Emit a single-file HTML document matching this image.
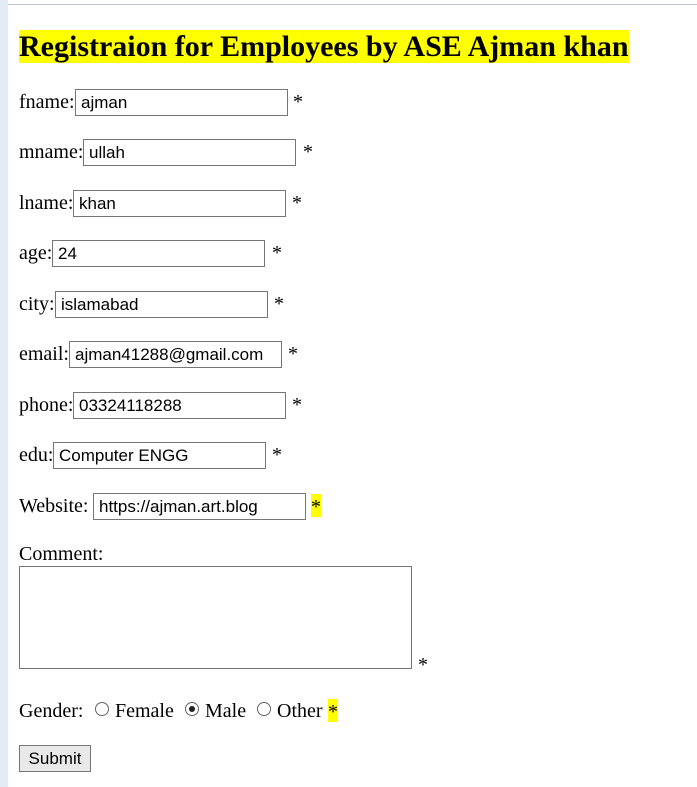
<!DOCTYPE html>
<html><head><meta charset="utf-8"><style>
html,body{margin:0;padding:0;width:697px;height:787px;overflow:hidden;background:#fff;font-family:"Liberation Serif",serif;}
.strip{position:absolute;left:0;top:0;width:8px;height:787px;background:#e3ecf5;}
.topline{position:absolute;left:8px;top:4px;width:689px;height:1px;background:#b9c4cf;}
h1{position:absolute;left:19px;top:30px;margin:0;height:33px;line-height:33px;font-size:30px;font-weight:bold;background:#ff0;white-space:nowrap;}
.l{position:absolute;font-size:20px;line-height:26px;white-space:nowrap;color:#000;}
.i{position:absolute;border:1px solid #767676;font-family:"Liberation Sans",sans-serif;font-size:17px;line-height:26px;padding-left:5px;box-sizing:border-box;width:213px;height:27px;color:#000;}
.s{position:absolute;font-size:20px;line-height:26px;}
.y{background:#ff0;}
.ta{position:absolute;left:19px;top:566px;width:393px;height:103px;border:1px solid #767676;box-sizing:border-box;}
.r{position:absolute;width:14px;height:14px;border:1px solid #666;border-radius:50%;box-sizing:border-box;}
.r.c::after{content:"";position:absolute;left:3px;top:3px;width:6px;height:6px;border-radius:50%;background:#222;}
.btn{position:absolute;left:19px;top:745px;width:72px;height:27px;border:1px solid #767676;background:#e9e9e9;box-sizing:border-box;font-family:"Liberation Sans",sans-serif;font-size:17px;line-height:25px;text-align:center;}
</style></head><body>
<div class="strip"></div><div class="topline"></div>
<h1>Registraion for Employees by ASE Ajman khan</h1>

<div class="l" style="left:19px;top:89px">fname:</div><div class="i" style="left:75px;top:89px">ajman</div><div class="s" style="left:293px;top:89px">*</div>
<div class="l" style="left:19px;top:139px">mname:</div><div class="i" style="left:83px;top:139px">ullah</div><div class="s" style="left:303px;top:139px">*</div>
<div class="l" style="left:19px;top:190px">lname:</div><div class="i" style="left:73px;top:190px">khan</div><div class="s" style="left:292px;top:190px">*</div>
<div class="l" style="left:19px;top:240px">age:</div><div class="i" style="left:52px;top:240px">24</div><div class="s" style="left:272px;top:240px">*</div>
<div class="l" style="left:19px;top:291px">city:</div><div class="i" style="left:55px;top:291px">islamabad</div><div class="s" style="left:274px;top:291px">*</div>
<div class="l" style="left:19px;top:341px">email:</div><div class="i" style="left:69px;top:341px">ajman41288@gmail.com</div><div class="s" style="left:288px;top:341px">*</div>
<div class="l" style="left:19px;top:392px">phone:</div><div class="i" style="left:73px;top:392px">03324118288</div><div class="s" style="left:292px;top:392px">*</div>
<div class="l" style="left:19px;top:442px">edu:</div><div class="i" style="left:53px;top:442px">Computer ENGG</div><div class="s" style="left:272px;top:442px">*</div>
<div class="l" style="left:19px;top:493px">Website:</div><div class="i" style="left:93px;top:493px">https://ajman.art.blog</div><div class="s y" style="left:311px;top:494px;height:23px;width:10px;line-height:26px;overflow:hidden">*</div>

<div class="l" style="left:19px;top:541px">Comment:</div>
<div class="ta"></div><div class="s" style="left:418px;top:652px">*</div>

<div class="l" style="left:19px;top:698px">Gender:</div>
<div class="r" style="left:95px;top:702px"></div><div class="l" style="left:115px;top:698px">Female</div>
<div class="r c" style="left:185px;top:702px"></div><div class="l" style="left:205px;top:698px">Male</div>
<div class="r" style="left:257px;top:702px"></div><div class="l" style="left:277px;top:698px">Other</div>
<div class="s y" style="left:328px;top:699px;height:23px;width:10px;overflow:hidden">*</div>

<div class="btn">Submit</div>
</body></html>
